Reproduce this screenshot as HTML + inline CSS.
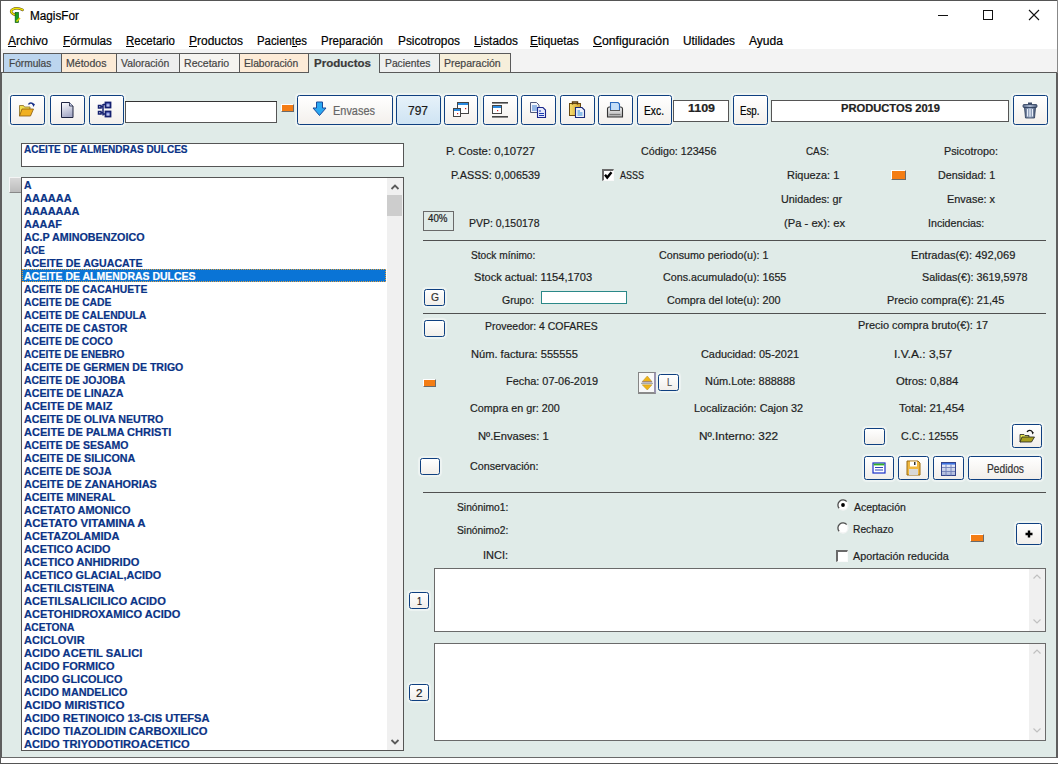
<!DOCTYPE html><html><head><meta charset="utf-8"><style>
html,body{margin:0;padding:0;width:1058px;height:764px;overflow:hidden;background:#fff}
body{position:relative;font-family:"Liberation Sans",sans-serif}
body>div,body>svg{position:absolute}
.t{white-space:nowrap;-webkit-text-stroke:0.2px currentColor}
</style></head><body>
<div style="left:0px;top:0px;width:1058px;height:31px;background:#fff"></div>
<div style="left:0px;top:31px;width:1058px;height:18px;background:#fff"></div>
<div style="left:0px;top:49px;width:1058px;height:24px;background:#f3f3f3"></div>
<div style="left:0px;top:72px;width:1058px;height:1px;background:#5a5a5a"></div>
<div style="left:0px;top:73px;width:1058px;height:684px;background:#e0ebe8"></div>
<div style="left:0px;top:757px;width:1058px;height:1px;background:#6a6a6a"></div>
<div style="left:0px;top:758px;width:1058px;height:5px;background:#fff"></div>
<div style="left:0px;top:763px;width:1058px;height:1px;background:#555"></div>
<div style="left:0px;top:0px;width:1058px;height:1px;background:#555"></div>
<div style="left:0px;top:0px;width:1px;height:764px;background:#555"></div>
<div style="left:0px;top:73px;width:2px;height:685px;background:#5e5e5e"></div>
<div style="left:1056px;top:73px;width:2px;height:685px;background:#5e5e5e"></div>
<div style="left:1057px;top:0px;width:1px;height:73px;background:#888"></div>
<svg style="left:8px;top:5px" width="18" height="19" viewBox="0 0 18 19"><path d="M7.5 10 C4 9 1.5 6.5 4.5 4.5 C7 3 11 3 14.5 4.8" fill="none" stroke="#5a4a20" stroke-width="2.6" stroke-linecap="round"/><path d="M7.5 10 C4 9 1.5 6.5 4.5 4.5 C7 3 11 3 14.5 4.8" fill="none" stroke="#f0e400" stroke-width="1.6" stroke-linecap="round"/><rect x="7.2" y="7.5" width="3.2" height="10" fill="#18a020" stroke="#0b5a10" stroke-width="0.7"/><path d="M8.5 16.5 L12 13" stroke="#e0d000" stroke-width="1.6"/></svg>
<div class="t" style="left:30px;top:6px;font-size:12px;line-height:20px;color:#000;transform:scaleX(0.9796);transform-origin:0 0;">MagisFor</div>
<div style="left:938px;top:15px;width:10px;height:1px;background:#111"></div>
<div style="left:983px;top:10px;width:10px;height:10px;border:1px solid #111;box-sizing:border-box"></div>
<svg style="left:1028px;top:9px" width="12" height="12" viewBox="0 0 12 12"><path d="M1 1 L11 11 M11 1 L1 11" stroke="#111" stroke-width="1.1"/></svg>
<div class="t" style="left:8px;top:31px;font-size:12px;line-height:20px;color:#000;transform:scaleX(0.9995);transform-origin:0 0;">Archivo</div>
<div style="left:8px;top:46px;width:8px;height:1px;background:#000"></div>
<div class="t" style="left:63px;top:31px;font-size:12px;line-height:20px;color:#000;transform:scaleX(0.9796);transform-origin:0 0;">Fórmulas</div>
<div style="left:63px;top:46px;width:7px;height:1px;background:#000"></div>
<div class="t" style="left:126px;top:31px;font-size:12px;line-height:20px;color:#000;transform:scaleX(0.9538);transform-origin:0 0;">Recetario</div>
<div style="left:126px;top:46px;width:8px;height:1px;background:#000"></div>
<div class="t" style="left:189px;top:31px;font-size:12px;line-height:20px;color:#000;transform:scaleX(0.9993);transform-origin:0 0;">Productos</div>
<div style="left:189px;top:46px;width:8px;height:1px;background:#000"></div>
<div class="t" style="left:257px;top:31px;font-size:12px;line-height:20px;color:#000;transform:scaleX(0.9486);transform-origin:0 0;">Pacientes</div>
<div style="left:292px;top:46px;width:5px;height:1px;background:#000"></div>
<div class="t" style="left:321px;top:31px;font-size:12px;line-height:20px;color:#000;transform:scaleX(0.9580);transform-origin:0 0;">Preparación</div>
<div class="t" style="left:398px;top:31px;font-size:12px;line-height:20px;color:#000;transform:scaleX(0.9887);transform-origin:0 0;">Psicotropos</div>
<div class="t" style="left:474px;top:31px;font-size:12px;line-height:20px;color:#000;transform:scaleX(0.9842);transform-origin:0 0;">Listados</div>
<div style="left:474px;top:46px;width:7px;height:1px;background:#000"></div>
<div class="t" style="left:530px;top:31px;font-size:12px;line-height:20px;color:#000;transform:scaleX(0.9791);transform-origin:0 0;">Etiquetas</div>
<div style="left:530px;top:46px;width:8px;height:1px;background:#000"></div>
<div class="t" style="left:593px;top:31px;font-size:12px;line-height:20px;color:#000;transform:scaleX(1.0261);transform-origin:0 0;">Configuración</div>
<div style="left:593px;top:46px;width:9px;height:1px;background:#000"></div>
<div class="t" style="left:683px;top:31px;font-size:12px;line-height:20px;color:#000;transform:scaleX(0.9865);transform-origin:0 0;">Utilidades</div>
<div class="t" style="left:749px;top:31px;font-size:12px;line-height:20px;color:#000;transform:scaleX(1.0054);transform-origin:0 0;">Ayuda</div>
<div style="left:3px;top:53px;width:59px;height:19px;background:#bcd5ee;border:1px solid #5a5a5a;border-bottom:none;box-sizing:border-box"></div>
<div class="t" style="left:9.2px;top:53px;font-size:11px;line-height:20px;color:#444;transform:scaleX(0.9227);transform-origin:0 0;">Fórmulas</div>
<div style="left:61px;top:53px;width:56px;height:19px;background:#fcebd6;border:1px solid #5a5a5a;border-bottom:none;box-sizing:border-box"></div>
<div class="t" style="left:66.3px;top:53px;font-size:11px;line-height:20px;color:#444;transform:scaleX(0.9600);transform-origin:0 0;">Métodos</div>
<div style="left:116px;top:53px;width:64px;height:19px;background:#eeeeee;border:1px solid #5a5a5a;border-bottom:none;box-sizing:border-box"></div>
<div class="t" style="left:121.3px;top:53px;font-size:11px;line-height:20px;color:#444;transform:scaleX(0.9421);transform-origin:0 0;">Valoración</div>
<div style="left:179px;top:53px;width:61px;height:19px;background:#f6f4f0;border:1px solid #5a5a5a;border-bottom:none;box-sizing:border-box"></div>
<div class="t" style="left:184.1px;top:53px;font-size:11px;line-height:20px;color:#444;transform:scaleX(0.9601);transform-origin:0 0;">Recetario</div>
<div style="left:239px;top:53px;width:70px;height:19px;background:#fdebd7;border:1px solid #5a5a5a;border-bottom:none;box-sizing:border-box"></div>
<div class="t" style="left:244.2px;top:53px;font-size:11px;line-height:20px;color:#444;transform:scaleX(0.9347);transform-origin:0 0;">Elaboración</div>
<div style="left:308px;top:53px;width:72px;height:20px;background:#e0ebe8;border:1px solid #5a5a5a;border-bottom:none;box-sizing:border-box"></div>
<div class="t" style="left:313.7px;top:53px;font-size:11px;line-height:20px;color:#3a3a3a;font-weight:bold;transform:scaleX(1.0480);transform-origin:0 0;">Productos</div>
<div style="left:379px;top:53px;width:61px;height:19px;background:#eef0f0;border:1px solid #5a5a5a;border-bottom:none;box-sizing:border-box"></div>
<div class="t" style="left:384.5px;top:53px;font-size:11px;line-height:20px;color:#444;transform:scaleX(0.9378);transform-origin:0 0;">Pacientes</div>
<div style="left:439px;top:53px;width:72px;height:19px;background:#f6efdb;border:1px solid #5a5a5a;border-bottom:none;box-sizing:border-box"></div>
<div class="t" style="left:444.2px;top:53px;font-size:11px;line-height:20px;color:#444;transform:scaleX(0.9560);transform-origin:0 0;">Preparación</div>
<div style="left:309px;top:72px;width:70px;height:1px;background:#e0ebe8"></div>
<div style="left:10px;top:95px;width:35px;height:30px;background:linear-gradient(#ffffff,#f3f0ec);border:1px solid #0e3f80;border-radius:2.5px;box-sizing:border-box;box-shadow:0 0 1px 2px rgba(255,255,255,0.45);"></div>
<div style="left:50px;top:95px;width:35px;height:30px;background:linear-gradient(#ffffff,#f3f0ec);border:1px solid #0e3f80;border-radius:2.5px;box-sizing:border-box;box-shadow:0 0 1px 2px rgba(255,255,255,0.45);"></div>
<div style="left:89px;top:95px;width:35px;height:30px;background:linear-gradient(#ffffff,#f3f0ec);border:1px solid #0e3f80;border-radius:2.5px;box-sizing:border-box;box-shadow:0 0 1px 2px rgba(255,255,255,0.45);"></div>
<svg style="left:18px;top:101px" width="18" height="17" viewBox="0 0 18 17"><path d="M10.5 3.5 C11.5 1.5 14 1.2 15.5 3.5" fill="none" stroke="#17308a" stroke-width="1.5"/><path d="M14 2.5 L17 3 L15.5 6 Z" fill="#17308a"/><path d="M1.5 4.5 L5.5 4.5 L6.5 6 L12 6 L12 8 L1.5 15 Z" fill="#f0de50" stroke="#8a6a20" stroke-width="0.8"/><path d="M4 8 L15.5 8 L12.5 15 L1.5 15 Z" fill="#f0b020" stroke="#8a5a10" stroke-width="0.8"/></svg>
<svg style="left:60px;top:101px" width="15" height="18" viewBox="0 0 15 18"><defs><linearGradient id="dg" x1="0" y1="0" x2="0.3" y2="1"><stop offset="0" stop-color="#ffffff"/><stop offset="1" stop-color="#a8acc8"/></linearGradient></defs><path d="M1.5 1.5 L9.5 1.5 L13 5 L13 16.5 L1.5 16.5 Z" fill="url(#dg)" stroke="#1e2440" stroke-width="1"/><path d="M9.5 1.5 L9.5 5 L13 5" fill="#c8d0e8" stroke="#1e2440" stroke-width="0.8"/></svg>
<svg style="left:97px;top:101px" width="15" height="17" viewBox="0 0 15 17"><defs><linearGradient id="tr" x1="0" y1="0" x2="0" y2="1"><stop offset="0" stop-color="#6a7ae0"/><stop offset="1" stop-color="#e8f0ff"/></linearGradient></defs><rect x="8.5" y="1.5" width="5" height="5" fill="url(#tr)" stroke="#142070" stroke-width="1.8"/><rect x="8.5" y="10.5" width="5" height="5" fill="url(#tr)" stroke="#142070" stroke-width="1.8"/><rect x="1.5" y="4.5" width="2.5" height="2.5" fill="#fff" stroke="#142070" stroke-width="1.5"/><rect x="1.5" y="10.5" width="2.5" height="2.5" fill="#fff" stroke="#142070" stroke-width="1.5"/><path d="M4 5.8 L6.5 5.8 M4 11.8 L6.5 11.8 M6 3 L6 14.5 M6 3.5 L8 3.5 M6 13 L8 13" stroke="#142070" stroke-width="1.5"/></svg>
<div style="left:125px;top:101px;width:152px;height:22px;background:#fff;border:1px solid #555;box-sizing:border-box"></div>
<div style="left:125px;top:101px;width:152px;height:2px;border-top:1px solid #333;box-sizing:border-box"></div>
<div style="left:281px;top:104px;width:13px;height:8px;background:#f47d14;border-top:1px solid #fff;border-left:1px solid #fff;border-bottom:1px solid #6a6a6a;border-right:1px solid #6a6a6a;box-sizing:border-box"></div>
<div style="left:297px;top:95px;width:96px;height:30px;background:linear-gradient(#ffffff,#f3f0ec);border:1px solid #0e3f80;border-radius:2.5px;box-sizing:border-box;box-shadow:0 0 1px 2px rgba(255,255,255,0.45);"></div>
<svg style="left:312px;top:101px" width="15" height="16" viewBox="0 0 15 16"><path d="M4.5 1 L10.5 1 L10.5 7 L14 7 L7.5 14.5 L1 7 L4.5 7 Z" fill="#2aa8f2" stroke="#1a4a9a" stroke-width="1"/></svg>
<div class="t" style="left:333px;top:101px;font-size:12px;line-height:20px;color:#666;transform:scaleX(0.9124);transform-origin:0 0;">Envases</div>
<div style="left:396px;top:95px;width:45px;height:30px;background:linear-gradient(#e6f2fa,#cfe4f3);border:1px solid #0e3f80;border-radius:2.5px;box-sizing:border-box;box-shadow:0 0 1px 2px rgba(255,255,255,0.45);"></div>
<div class="t" style="left:408px;top:101px;font-size:12px;line-height:20px;color:#1a1a1a;transform:scaleX(0.9986);transform-origin:0 0;">797</div>
<div style="left:444px;top:95px;width:34px;height:30px;background:linear-gradient(#ffffff,#f3f0ec);border:1px solid #0e3f80;border-radius:2.5px;box-sizing:border-box;box-shadow:0 0 1px 2px rgba(255,255,255,0.45);"></div>
<div style="left:483px;top:95px;width:35px;height:30px;background:linear-gradient(#ffffff,#f3f0ec);border:1px solid #0e3f80;border-radius:2.5px;box-sizing:border-box;box-shadow:0 0 1px 2px rgba(255,255,255,0.45);"></div>
<svg style="left:452px;top:102px" width="18" height="16" viewBox="0 0 18 16"><rect x="5.5" y="0.5" width="11" height="11" fill="#fff" stroke="#444" stroke-width="1"/><rect x="6" y="1" width="10" height="2" fill="#2a8ae0"/><rect x="1.5" y="6.5" width="7" height="8" fill="#fff" stroke="#444" stroke-width="1"/><rect x="2" y="7" width="6" height="2" fill="#2a8ae0"/><rect x="13" y="6" width="1.2" height="1.2" fill="#d02020"/><rect x="5" y="11" width="1.2" height="1.2" fill="#d02020"/></svg>
<svg style="left:491px;top:102px" width="18" height="16" viewBox="0 0 18 16"><rect x="1" y="0" width="16" height="1.6" fill="#444"/><rect x="1" y="14" width="16" height="1.6" fill="#444"/><rect x="1.5" y="3.5" width="9" height="8" fill="#fff" stroke="#444" stroke-width="1"/><rect x="2" y="4" width="8" height="2" fill="#2a8ae0"/><rect x="6" y="8" width="1.2" height="1.2" fill="#d02020"/></svg>
<div style="left:521px;top:95px;width:35px;height:30px;background:linear-gradient(#ffffff,#f3f0ec);border:1px solid #0e3f80;border-radius:2.5px;box-sizing:border-box;box-shadow:0 0 1px 2px rgba(255,255,255,0.45);"></div>
<div style="left:560px;top:95px;width:35px;height:30px;background:linear-gradient(#ffffff,#f3f0ec);border:1px solid #0e3f80;border-radius:2.5px;box-sizing:border-box;box-shadow:0 0 1px 2px rgba(255,255,255,0.45);"></div>
<div style="left:598px;top:95px;width:35px;height:30px;background:linear-gradient(#ffffff,#f3f0ec);border:1px solid #0e3f80;border-radius:2.5px;box-sizing:border-box;box-shadow:0 0 1px 2px rgba(255,255,255,0.45);"></div>
<svg style="left:529px;top:101px" width="18" height="18" viewBox="0 0 18 18"><path d="M1.5 1.5 L7.5 1.5 L10 4 L10 11.5 L1.5 11.5 Z" fill="#f2f4fa" stroke="#50587a" stroke-width="1"/><path d="M3 5 L8 5 M3 7 L8 7 M3 9 L8 9" stroke="#3a7ad0" stroke-width="1"/><path d="M8.5 6.5 L14 6.5 L16.5 9 L16.5 16.5 L8.5 16.5 Z" fill="#e6eafc" stroke="#1a268a" stroke-width="1.1"/><path d="M10 10 L12 10 M10 12.5 L15 12.5 M10 14.5 L15 14.5" stroke="#1a3ab0" stroke-width="1.1"/></svg>
<svg style="left:568px;top:101px" width="18" height="18" viewBox="0 0 18 18"><defs><linearGradient id="cb" x1="0" x2="1"><stop offset="0" stop-color="#f8e070"/><stop offset="1" stop-color="#d0a030"/></linearGradient></defs><rect x="1.5" y="2.5" width="11" height="12" fill="url(#cb)" stroke="#6a4a10" stroke-width="1"/><path d="M4.5 3.5 L4.5 1 L9.5 1 L9.5 3.5" fill="none" stroke="#5a3a08" stroke-width="1.4"/><path d="M7.5 6.5 L14 6.5 L16.5 9 L16.5 16.5 L7.5 16.5 Z" fill="#eef2fc" stroke="#1a2a7a" stroke-width="1.1"/><path d="M9.5 10 L12 10 M9.5 12 L14.5 12 M9.5 14 L14.5 14" stroke="#2a8ad8" stroke-width="1.1"/></svg>
<svg style="left:606px;top:101px" width="18" height="17" viewBox="0 0 18 17"><defs><linearGradient id="pb" x1="0" y1="0" x2="0" y2="1"><stop offset="0" stop-color="#f4f4f4"/><stop offset="1" stop-color="#b0b0b0"/></linearGradient></defs><path d="M1.5 16 L1.5 8 Q1.5 6 3.5 6 L14.5 6 Q16.5 6 16.5 8 L16.5 16 Z" fill="url(#pb)" stroke="#333" stroke-width="1.1"/><path d="M4.5 9 L4.5 1.5 L12 1.5 L13.5 3 L13.5 9" fill="#c4def8" stroke="#2a6ac0" stroke-width="1.1"/><path d="M4 9.5 L14 9.5" stroke="#555" stroke-width="1"/><path d="M3.5 13.5 L14.5 13.5" stroke="#777" stroke-width="1.2"/></svg>
<div style="left:637px;top:95px;width:35px;height:30px;background:linear-gradient(#ffffff,#f3f0ec);border:1px solid #0e3f80;border-radius:2.5px;box-sizing:border-box;box-shadow:0 0 1px 2px rgba(255,255,255,0.45);"></div>
<div class="t" style="left:643.5px;top:101px;font-size:12px;line-height:20px;color:#000;transform:scaleX(0.8569);transform-origin:0 0;">Exc.</div>
<div style="left:673px;top:100px;width:56px;height:22px;background:#fff;border:1px solid #555;box-sizing:border-box"></div>
<div class="t" style="left:687.5px;top:98px;font-size:11px;line-height:20px;color:#222;font-weight:bold;transform:scaleX(1.1314);transform-origin:0 0;">1109</div>
<div style="left:733px;top:95px;width:35px;height:30px;background:linear-gradient(#ffffff,#f3f0ec);border:1px solid #0e3f80;border-radius:2.5px;box-sizing:border-box;box-shadow:0 0 1px 2px rgba(255,255,255,0.45);"></div>
<div class="t" style="left:739.5px;top:101px;font-size:12px;line-height:20px;color:#000;transform:scaleX(0.8120);transform-origin:0 0;">Esp.</div>
<div style="left:771px;top:100px;width:238px;height:22px;background:#fff;border:1px solid #555;box-sizing:border-box"></div>
<div class="t" style="left:841px;top:98px;font-size:11px;line-height:20px;color:#222;font-weight:bold;transform:scaleX(1.0143);transform-origin:0 0;">PRODUCTOS 2019</div>
<div style="left:1013px;top:95px;width:35px;height:30px;background:linear-gradient(#ffffff,#f3f0ec);border:1px solid #0e3f80;border-radius:2.5px;box-sizing:border-box;box-shadow:0 0 1px 2px rgba(255,255,255,0.45);"></div>
<svg style="left:1022px;top:102px" width="16" height="17" viewBox="0 0 16 17"><defs><linearGradient id="tg" x1="0" x2="1"><stop offset="0" stop-color="#5a6a88"/><stop offset="0.5" stop-color="#aab8d0"/><stop offset="1" stop-color="#4a5a78"/></linearGradient></defs><rect x="6" y="0.5" width="4" height="2" fill="#3a4a68"/><rect x="1" y="2.5" width="14" height="3" rx="1" fill="url(#tg)" stroke="#2a3a58" stroke-width="0.8"/><path d="M2.5 5.5 L13.5 5.5 L12.5 16 L3.5 16 Z" fill="url(#tg)" stroke="#2a3a58" stroke-width="0.8"/><path d="M5.5 7 L5.5 14.5 M8 7 L8 14.5 M10.5 7 L10.5 14.5" stroke="#e8eef8" stroke-width="1"/></svg>
<div style="left:21px;top:143px;width:383px;height:24px;background:#fff;border:1px solid #555;box-sizing:border-box"></div>
<div class="t" style="left:23.5px;top:140px;font-size:10px;line-height:20px;color:#0a3386;font-weight:bold;transform:scaleX(0.9997);transform-origin:0 0;">ACEITE DE ALMENDRAS DULCES</div>
<div style="left:9px;top:177px;width:12px;height:16px;background:linear-gradient(#d8d8d8,#bcbcbc);border-top:1px solid #f4f4f4;border-left:1px solid #f4f4f4;border-bottom:1px solid #888;box-sizing:border-box"></div>
<div style="left:21px;top:177px;width:383px;height:574px;background:#fff;border:1px solid #555;box-sizing:border-box"></div>
<div class="t" style="left:23.5px;top:175px;font-size:10.5px;line-height:20px;color:#0a3386;font-weight:bold;transform:scaleX(0.9892);transform-origin:0 0;">A</div>
<div class="t" style="left:23.5px;top:188px;font-size:10.5px;line-height:20px;color:#0a3386;font-weight:bold;transform:scaleX(1.0485);transform-origin:0 0;">AAAAAA</div>
<div class="t" style="left:23.5px;top:201px;font-size:10.5px;line-height:20px;color:#0a3386;font-weight:bold;transform:scaleX(1.0419);transform-origin:0 0;">AAAAAAA</div>
<div class="t" style="left:23.5px;top:214px;font-size:10.5px;line-height:20px;color:#0a3386;font-weight:bold;transform:scaleX(1.0288);transform-origin:0 0;">AAAAF</div>
<div class="t" style="left:23.5px;top:227px;font-size:10.5px;line-height:20px;color:#0a3386;font-weight:bold;transform:scaleX(1.0226);transform-origin:0 0;">AC.P AMINOBENZOICO</div>
<div class="t" style="left:23.5px;top:240px;font-size:10.5px;line-height:20px;color:#0a3386;font-weight:bold;transform:scaleX(0.9428);transform-origin:0 0;">ACE</div>
<div class="t" style="left:23.5px;top:253px;font-size:10.5px;line-height:20px;color:#0a3386;font-weight:bold;transform:scaleX(1.0106);transform-origin:0 0;">ACEITE DE AGUACATE</div>
<div style="left:22px;top:269px;width:364px;height:13px;background:#0a74d6;outline:1px dotted #e0a040;outline-offset:-1px"></div>
<div class="t" style="left:23.5px;top:266px;font-size:10.5px;line-height:20px;color:#fff;font-weight:bold;transform:scaleX(0.9994);transform-origin:0 0;">ACEITE DE ALMENDRAS DULCES</div>
<div class="t" style="left:23.5px;top:279px;font-size:10.5px;line-height:20px;color:#0a3386;font-weight:bold;transform:scaleX(0.9877);transform-origin:0 0;">ACEITE DE CACAHUETE</div>
<div class="t" style="left:23.5px;top:292px;font-size:10.5px;line-height:20px;color:#0a3386;font-weight:bold;transform:scaleX(0.9867);transform-origin:0 0;">ACEITE DE CADE</div>
<div class="t" style="left:23.5px;top:305px;font-size:10.5px;line-height:20px;color:#0a3386;font-weight:bold;transform:scaleX(0.9843);transform-origin:0 0;">ACEITE DE CALENDULA</div>
<div class="t" style="left:23.5px;top:318px;font-size:10.5px;line-height:20px;color:#0a3386;font-weight:bold;transform:scaleX(1.0032);transform-origin:0 0;">ACEITE DE CASTOR</div>
<div class="t" style="left:23.5px;top:331px;font-size:10.5px;line-height:20px;color:#0a3386;font-weight:bold;transform:scaleX(0.9809);transform-origin:0 0;">ACEITE DE COCO</div>
<div class="t" style="left:23.5px;top:344px;font-size:10.5px;line-height:20px;color:#0a3386;font-weight:bold;transform:scaleX(0.9668);transform-origin:0 0;">ACEITE DE ENEBRO</div>
<div class="t" style="left:23.5px;top:357px;font-size:10.5px;line-height:20px;color:#0a3386;font-weight:bold;transform:scaleX(1.0039);transform-origin:0 0;">ACEITE DE GERMEN DE TRIGO</div>
<div class="t" style="left:23.5px;top:370px;font-size:10.5px;line-height:20px;color:#0a3386;font-weight:bold;transform:scaleX(0.9931);transform-origin:0 0;">ACEITE DE JOJOBA</div>
<div class="t" style="left:23.5px;top:383px;font-size:10.5px;line-height:20px;color:#0a3386;font-weight:bold;transform:scaleX(1.0203);transform-origin:0 0;">ACEITE DE LINAZA</div>
<div class="t" style="left:23.5px;top:396px;font-size:10.5px;line-height:20px;color:#0a3386;font-weight:bold;transform:scaleX(1.0463);transform-origin:0 0;">ACEITE DE MAIZ</div>
<div class="t" style="left:23.5px;top:409px;font-size:10.5px;line-height:20px;color:#0a3386;font-weight:bold;transform:scaleX(1.0154);transform-origin:0 0;">ACEITE DE OLIVA NEUTRO</div>
<div class="t" style="left:23.5px;top:422px;font-size:10.5px;line-height:20px;color:#0a3386;font-weight:bold;transform:scaleX(1.0521);transform-origin:0 0;">ACEITE DE PALMA CHRISTI</div>
<div class="t" style="left:23.5px;top:435px;font-size:10.5px;line-height:20px;color:#0a3386;font-weight:bold;transform:scaleX(0.9997);transform-origin:0 0;">ACEITE DE SESAMO</div>
<div class="t" style="left:23.5px;top:448px;font-size:10.5px;line-height:20px;color:#0a3386;font-weight:bold;transform:scaleX(1.0202);transform-origin:0 0;">ACEITE DE SILICONA</div>
<div class="t" style="left:23.5px;top:461px;font-size:10.5px;line-height:20px;color:#0a3386;font-weight:bold;transform:scaleX(0.9998);transform-origin:0 0;">ACEITE DE SOJA</div>
<div class="t" style="left:23.5px;top:474px;font-size:10.5px;line-height:20px;color:#0a3386;font-weight:bold;transform:scaleX(1.0301);transform-origin:0 0;">ACEITE DE ZANAHORIAS</div>
<div class="t" style="left:23.5px;top:487px;font-size:10.5px;line-height:20px;color:#0a3386;font-weight:bold;transform:scaleX(1.0241);transform-origin:0 0;">ACEITE MINERAL</div>
<div class="t" style="left:23.5px;top:500px;font-size:10.5px;line-height:20px;color:#0a3386;font-weight:bold;transform:scaleX(1.0403);transform-origin:0 0;">ACETATO AMONICO</div>
<div class="t" style="left:23.5px;top:513px;font-size:10.5px;line-height:20px;color:#0a3386;font-weight:bold;transform:scaleX(1.0887);transform-origin:0 0;">ACETATO VITAMINA A</div>
<div class="t" style="left:23.5px;top:526px;font-size:10.5px;line-height:20px;color:#0a3386;font-weight:bold;transform:scaleX(1.0507);transform-origin:0 0;">ACETAZOLAMIDA</div>
<div class="t" style="left:23.5px;top:539px;font-size:10.5px;line-height:20px;color:#0a3386;font-weight:bold;transform:scaleX(1.0346);transform-origin:0 0;">ACETICO ACIDO</div>
<div class="t" style="left:23.5px;top:552px;font-size:10.5px;line-height:20px;color:#0a3386;font-weight:bold;transform:scaleX(1.0552);transform-origin:0 0;">ACETICO ANHIDRIDO</div>
<div class="t" style="left:23.5px;top:565px;font-size:10.5px;line-height:20px;color:#0a3386;font-weight:bold;transform:scaleX(1.0271);transform-origin:0 0;">ACETICO GLACIAL,ACIDO</div>
<div class="t" style="left:23.5px;top:578px;font-size:10.5px;line-height:20px;color:#0a3386;font-weight:bold;transform:scaleX(1.0412);transform-origin:0 0;">ACETILCISTEINA</div>
<div class="t" style="left:23.5px;top:591px;font-size:10.5px;line-height:20px;color:#0a3386;font-weight:bold;transform:scaleX(1.0600);transform-origin:0 0;">ACETILSALICILICO ACIDO</div>
<div class="t" style="left:23.5px;top:604px;font-size:10.5px;line-height:20px;color:#0a3386;font-weight:bold;transform:scaleX(1.0508);transform-origin:0 0;">ACETOHIDROXAMICO ACIDO</div>
<div class="t" style="left:23.5px;top:617px;font-size:10.5px;line-height:20px;color:#0a3386;font-weight:bold;transform:scaleX(0.9725);transform-origin:0 0;">ACETONA</div>
<div class="t" style="left:23.5px;top:630px;font-size:10.5px;line-height:20px;color:#0a3386;font-weight:bold;transform:scaleX(1.0494);transform-origin:0 0;">ACICLOVIR</div>
<div class="t" style="left:23.5px;top:643px;font-size:10.5px;line-height:20px;color:#0a3386;font-weight:bold;transform:scaleX(1.0618);transform-origin:0 0;">ACIDO ACETIL SALICI</div>
<div class="t" style="left:23.5px;top:656px;font-size:10.5px;line-height:20px;color:#0a3386;font-weight:bold;transform:scaleX(1.0483);transform-origin:0 0;">ACIDO FORMICO</div>
<div class="t" style="left:23.5px;top:669px;font-size:10.5px;line-height:20px;color:#0a3386;font-weight:bold;transform:scaleX(1.0349);transform-origin:0 0;">ACIDO GLICOLICO</div>
<div class="t" style="left:23.5px;top:682px;font-size:10.5px;line-height:20px;color:#0a3386;font-weight:bold;transform:scaleX(1.0306);transform-origin:0 0;">ACIDO MANDELICO</div>
<div class="t" style="left:23.5px;top:695px;font-size:10.5px;line-height:20px;color:#0a3386;font-weight:bold;transform:scaleX(1.1033);transform-origin:0 0;">ACIDO MIRISTICO</div>
<div class="t" style="left:23.5px;top:708px;font-size:10.5px;line-height:20px;color:#0a3386;font-weight:bold;transform:scaleX(1.0564);transform-origin:0 0;">ACIDO RETINOICO 13-CIS UTEFSA</div>
<div class="t" style="left:23.5px;top:721px;font-size:10.5px;line-height:20px;color:#0a3386;font-weight:bold;transform:scaleX(1.0664);transform-origin:0 0;">ACIDO TIAZOLIDIN CARBOXILICO</div>
<div class="t" style="left:23.5px;top:734px;font-size:10.5px;line-height:20px;color:#0a3386;font-weight:bold;transform:scaleX(1.0553);transform-origin:0 0;">ACIDO TRIYODOTIROACETICO</div>
<div style="left:387px;top:178px;width:16px;height:572px;background:#f0f0f0"></div>
<div style="left:387px;top:195px;width:15px;height:21px;background:#cdcdcd"></div>
<svg style="left:390px;top:183px" width="10" height="8" viewBox="0 0 10 8"><path d="M1.5 6 L5 2.5 L8.5 6" fill="none" stroke="#5a5a5a" stroke-width="1.8"/></svg>
<svg style="left:390px;top:738px" width="10" height="8" viewBox="0 0 10 8"><path d="M1.5 2 L5 5.5 L8.5 2" fill="none" stroke="#5a5a5a" stroke-width="1.8"/></svg>
<div class="t" style="left:445.5px;top:141px;font-size:11px;line-height:20px;color:#1e1e1e;transform:scaleX(1.0274);transform-origin:0 0;">P. Coste: 0,10727</div>
<div class="t" style="left:641.1px;top:141px;font-size:11px;line-height:20px;color:#1e1e1e;transform:scaleX(0.9708);transform-origin:0 0;">Código: 123456</div>
<div class="t" style="left:805.5px;top:141px;font-size:11px;line-height:20px;color:#1e1e1e;transform:scaleX(0.8959);transform-origin:0 0;">CAS:</div>
<div class="t" style="left:943.5px;top:141px;font-size:11px;line-height:20px;color:#1e1e1e;transform:scaleX(0.9814);transform-origin:0 0;">Psicotropo:</div>
<div class="t" style="left:450.5px;top:165px;font-size:11px;line-height:20px;color:#1e1e1e;transform:scaleX(0.9856);transform-origin:0 0;">P.ASSS: 0,006539</div>
<div class="t" style="left:619.5px;top:165px;font-size:11px;line-height:20px;color:#1e1e1e;transform:scaleX(0.8179);transform-origin:0 0;">ASSS</div>
<div class="t" style="left:786.9px;top:165px;font-size:11px;line-height:20px;color:#1e1e1e;transform:scaleX(0.9927);transform-origin:0 0;">Riqueza: 1</div>
<div class="t" style="left:937.8px;top:165px;font-size:11px;line-height:20px;color:#1e1e1e;transform:scaleX(0.9761);transform-origin:0 0;">Densidad: 1</div>
<div class="t" style="left:781.2px;top:189px;font-size:11px;line-height:20px;color:#1e1e1e;transform:scaleX(0.9797);transform-origin:0 0;">Unidades: gr</div>
<div class="t" style="left:946.5px;top:189px;font-size:11px;line-height:20px;color:#1e1e1e;transform:scaleX(0.9939);transform-origin:0 0;">Envase: x</div>
<div class="t" style="left:469.0px;top:213px;font-size:11px;line-height:20px;color:#1e1e1e;transform:scaleX(0.9528);transform-origin:0 0;">PVP: 0,150178</div>
<div class="t" style="left:783.5px;top:213px;font-size:11px;line-height:20px;color:#1e1e1e;transform:scaleX(1.0184);transform-origin:0 0;">(Pa - ex): ex</div>
<div class="t" style="left:927.5px;top:213px;font-size:11px;line-height:20px;color:#1e1e1e;transform:scaleX(0.9693);transform-origin:0 0;">Incidencias:</div>
<div class="t" style="left:470.9px;top:245px;font-size:11px;line-height:20px;color:#1e1e1e;transform:scaleX(0.9228);transform-origin:0 0;">Stock mínimo:</div>
<div class="t" style="left:659.0px;top:245px;font-size:11px;line-height:20px;color:#1e1e1e;transform:scaleX(0.9733);transform-origin:0 0;">Consumo periodo(u): 1</div>
<div class="t" style="left:911.0px;top:245px;font-size:11px;line-height:20px;color:#1e1e1e;transform:scaleX(1.0093);transform-origin:0 0;">Entradas(€): 492,069</div>
<div class="t" style="left:473.8px;top:267px;font-size:11px;line-height:20px;color:#1e1e1e;transform:scaleX(1.0077);transform-origin:0 0;">Stock actual: 1154,1703</div>
<div class="t" style="left:663.2px;top:267px;font-size:11px;line-height:20px;color:#1e1e1e;transform:scaleX(0.9742);transform-origin:0 0;">Cons.acumulado(u): 1655</div>
<div class="t" style="left:922.1px;top:267px;font-size:11px;line-height:20px;color:#1e1e1e;transform:scaleX(0.9793);transform-origin:0 0;">Salidas(€): 3619,5978</div>
<div class="t" style="left:502.1px;top:290px;font-size:11px;line-height:20px;color:#1e1e1e;transform:scaleX(0.9576);transform-origin:0 0;">Grupo:</div>
<div class="t" style="left:667.0px;top:290px;font-size:11px;line-height:20px;color:#1e1e1e;transform:scaleX(0.9822);transform-origin:0 0;">Compra del lote(u): 200</div>
<div class="t" style="left:886.8px;top:290px;font-size:11px;line-height:20px;color:#1e1e1e;transform:scaleX(0.9933);transform-origin:0 0;">Precio compra(€): 21,45</div>
<div class="t" style="left:484.7px;top:316px;font-size:11px;line-height:20px;color:#1e1e1e;transform:scaleX(0.9511);transform-origin:0 0;">Proveedor: 4 COFARES</div>
<div class="t" style="left:857.8px;top:315px;font-size:11px;line-height:20px;color:#1e1e1e;transform:scaleX(0.9944);transform-origin:0 0;">Precio compra bruto(€): 17</div>
<div class="t" style="left:470.9px;top:344px;font-size:11px;line-height:20px;color:#1e1e1e;transform:scaleX(1.0097);transform-origin:0 0;">Núm. factura: 555555</div>
<div class="t" style="left:701.0px;top:344px;font-size:11px;line-height:20px;color:#1e1e1e;transform:scaleX(0.9892);transform-origin:0 0;">Caducidad: 05-2021</div>
<div class="t" style="left:893.8px;top:344px;font-size:11px;line-height:20px;color:#1e1e1e;transform:scaleX(1.0899);transform-origin:0 0;">I.V.A.: 3,57</div>
<div class="t" style="left:505.9px;top:371px;font-size:11px;line-height:20px;color:#1e1e1e;transform:scaleX(0.9909);transform-origin:0 0;">Fecha: 07-06-2019</div>
<div class="t" style="left:704.8px;top:371px;font-size:11px;line-height:20px;color:#1e1e1e;transform:scaleX(0.9956);transform-origin:0 0;">Núm.Lote: 888888</div>
<div class="t" style="left:896.3px;top:371px;font-size:11px;line-height:20px;color:#1e1e1e;transform:scaleX(1.0277);transform-origin:0 0;">Otros: 0,884</div>
<div class="t" style="left:470.0px;top:398px;font-size:11px;line-height:20px;color:#1e1e1e;transform:scaleX(0.9792);transform-origin:0 0;">Compra en gr: 200</div>
<div class="t" style="left:693.5px;top:398px;font-size:11px;line-height:20px;color:#1e1e1e;transform:scaleX(0.9848);transform-origin:0 0;">Localización: Cajon 32</div>
<div class="t" style="left:899.1px;top:398px;font-size:11px;line-height:20px;color:#1e1e1e;transform:scaleX(1.0384);transform-origin:0 0;">Total: 21,454</div>
<div class="t" style="left:477.9px;top:426px;font-size:11px;line-height:20px;color:#1e1e1e;transform:scaleX(1.0168);transform-origin:0 0;">Nº.Envases: 1</div>
<div class="t" style="left:698.5px;top:426px;font-size:11px;line-height:20px;color:#1e1e1e;transform:scaleX(1.0716);transform-origin:0 0;">Nº.Interno: 322</div>
<div class="t" style="left:901.0px;top:426px;font-size:11px;line-height:20px;color:#1e1e1e;transform:scaleX(0.9728);transform-origin:0 0;">C.C.: 12555</div>
<div class="t" style="left:470.0px;top:456px;font-size:11px;line-height:20px;color:#1e1e1e;transform:scaleX(0.9742);transform-origin:0 0;">Conservación:</div>
<div class="t" style="left:456.8px;top:497px;font-size:11px;line-height:20px;color:#1e1e1e;transform:scaleX(0.9340);transform-origin:0 0;">Sinónimo1:</div>
<div class="t" style="left:853.7px;top:497px;font-size:11px;line-height:20px;color:#1e1e1e;transform:scaleX(0.9518);transform-origin:0 0;">Aceptación</div>
<div class="t" style="left:456.8px;top:520px;font-size:11px;line-height:20px;color:#1e1e1e;transform:scaleX(0.9340);transform-origin:0 0;">Sinónimo2:</div>
<div class="t" style="left:853.2px;top:519px;font-size:11px;line-height:20px;color:#1e1e1e;transform:scaleX(0.9329);transform-origin:0 0;">Rechazo</div>
<div class="t" style="left:483.2px;top:545px;font-size:11px;line-height:20px;color:#1e1e1e;transform:scaleX(0.9978);transform-origin:0 0;">INCI:</div>
<div class="t" style="left:853.2px;top:546px;font-size:11px;line-height:20px;color:#1e1e1e;transform:scaleX(0.9782);transform-origin:0 0;">Aportación reducida</div>
<div style="left:423px;top:240px;width:623px;height:1px;background:#505050"></div>
<div style="left:423px;top:313px;width:623px;height:1px;background:#505050"></div>
<div style="left:423px;top:492px;width:623px;height:1px;background:#505050"></div>
<div style="left:602px;top:169px;width:12px;height:12px;background:#fff;border-top:2px solid #6a6a6a;border-left:2px solid #6a6a6a;border-bottom:1px solid #fafafa;border-right:1px solid #fafafa;box-sizing:border-box"></div>
<svg style="left:602px;top:169px" width="12" height="12" viewBox="0 0 12 12"><path d="M3 5.8 L5.2 8.5 L9.5 3.2" fill="none" stroke="#000" stroke-width="2.4"/></svg>
<div style="left:891px;top:170px;width:15px;height:10px;background:#f47d14;border-top:1px solid #fff;border-left:1px solid #fff;border-bottom:1px solid #6a6a6a;border-right:1px solid #6a6a6a;box-sizing:border-box"></div>
<div style="left:423px;top:211px;width:31px;height:20px;border:1px solid #6a6a6a;box-sizing:border-box"></div>
<div class="t" style="left:427.5px;top:209px;font-size:10px;line-height:20px;color:#222;transform:scaleX(0.9742);transform-origin:0 0;">40%</div>
<div style="left:424px;top:289px;width:21px;height:17px;background:linear-gradient(#ffffff,#f1eeea);border:1px solid #0e3f80;border-radius:2.5px;box-sizing:border-box;box-shadow:0 0 1px 2px rgba(255,255,255,0.45);"></div>
<div class="t" style="left:431px;top:287px;font-size:11px;line-height:20px;color:#333;transform:scaleX(0.9352);transform-origin:0 0;">G</div>
<div style="left:541px;top:291px;width:86px;height:13px;background:#fff;border:1px solid #2a8888;box-sizing:border-box"></div>
<div style="left:424px;top:320px;width:21px;height:17px;background:linear-gradient(#ffffff,#f1eeea);border:1px solid #0e3f80;border-radius:2.5px;box-sizing:border-box;box-shadow:0 0 1px 2px rgba(255,255,255,0.45);"></div>
<div style="left:423px;top:379px;width:13px;height:8px;background:#f47d14;border-top:1px solid #fff;border-left:1px solid #fff;border-bottom:1px solid #6a6a6a;border-right:1px solid #6a6a6a;box-sizing:border-box"></div>
<div style="left:638px;top:372px;width:18px;height:22px;background:#f8f8f8;border:1px solid #858585;border-right:2px solid #9a94b0;border-bottom:2px solid #8a8a8a;box-sizing:border-box"></div>
<svg style="left:640px;top:374px" width="15" height="18" viewBox="0 0 15 18"><path d="M2.2 7.7 L7.3 2 L12 7.7 Z" fill="#f0b418" stroke="#b08a20" stroke-width="0.5"/><path d="M2.2 7.9 L12 7.9" stroke="#6a5aa0" stroke-width="0.7"/><path d="M1 9.3 L13 9.3" stroke="#8a8a8a" stroke-width="0.9"/><path d="M2.2 10.8 L12 10.8 L7.3 16 Z" fill="#f0b418" stroke="#b08a20" stroke-width="0.5"/></svg>
<div style="left:658px;top:374px;width:21px;height:17px;background:linear-gradient(#ffffff,#f1eeea);border:1px solid #0e3f80;border-radius:2.5px;box-sizing:border-box;box-shadow:0 0 1px 2px rgba(255,255,255,0.45);"></div>
<div class="t" style="left:666.5px;top:373px;font-size:10px;line-height:20px;color:#555;transform:scaleX(0.8989);transform-origin:0 0;">L</div>
<div style="left:864px;top:428px;width:21px;height:17px;background:linear-gradient(#ffffff,#f1eeea);border:1px solid #0e3f80;border-radius:2.5px;box-sizing:border-box;box-shadow:0 0 1px 2px rgba(255,255,255,0.45);"></div>
<div style="left:1012px;top:424px;width:30px;height:24px;background:linear-gradient(#ffffff,#f1eeea);border:1px solid #0e3f80;border-radius:2.5px;box-sizing:border-box;box-shadow:0 0 1px 2px rgba(255,255,255,0.45);"></div>
<svg style="left:1019px;top:429px" width="17" height="14" viewBox="0 0 17 14"><path d="M8 3 C9 1 12 0.5 13.5 3" fill="none" stroke="#111" stroke-width="1.2"/><path d="M12.5 2.5 L15 3.5 L13.5 5.5 Z" fill="#111"/><path d="M1 5.5 L5 5.5 L6 6.5 L10 6.5 L10 8 L1 13 Z" fill="#e8e850" stroke="#222" stroke-width="0.8"/><path d="M3 8 L15.5 8 L12.5 13 L1 13 Z" fill="#a8a020" stroke="#222" stroke-width="0.8"/></svg>
<div style="left:420px;top:458px;width:20px;height:17px;background:linear-gradient(#ffffff,#f1eeea);border:1px solid #0e3f80;border-radius:2.5px;box-sizing:border-box;box-shadow:0 0 1px 2px rgba(255,255,255,0.45);"></div>
<div style="left:864px;top:456px;width:30px;height:24px;background:linear-gradient(#ffffff,#f1eeea);border:1px solid #0e3f80;border-radius:2.5px;box-sizing:border-box;box-shadow:0 0 1px 2px rgba(255,255,255,0.45);"></div>
<div style="left:898px;top:456px;width:31px;height:24px;background:linear-gradient(#ffffff,#f1eeea);border:1px solid #0e3f80;border-radius:2.5px;box-sizing:border-box;box-shadow:0 0 1px 2px rgba(255,255,255,0.45);"></div>
<div style="left:933px;top:456px;width:31px;height:24px;background:linear-gradient(#ffffff,#f1eeea);border:1px solid #0e3f80;border-radius:2.5px;box-sizing:border-box;box-shadow:0 0 1px 2px rgba(255,255,255,0.45);"></div>
<div style="left:968px;top:456px;width:74px;height:24px;background:linear-gradient(#ffffff,#f1eeea);border:1px solid #0e3f80;border-radius:2.5px;box-sizing:border-box;box-shadow:0 0 1px 2px rgba(255,255,255,0.45);"></div>
<svg style="left:872px;top:462px" width="14" height="12" viewBox="0 0 14 12"><rect x="1" y="1" width="12" height="10" fill="#fff" stroke="#1a30c8" stroke-width="1.2"/><rect x="1.6" y="1.6" width="10.8" height="1.8" fill="#30b028"/><path d="M3 5.5 L11 5.5 M3 8 L11 8" stroke="#1a30b0" stroke-width="0.9"/></svg>
<svg style="left:906px;top:460px" width="15" height="16" viewBox="0 0 15 16"><path d="M1 1 L12 1 L14 3 L14 15 L1 15 Z" fill="#f0b840" stroke="#9a6a10" stroke-width="1"/><rect x="4" y="1.5" width="7" height="5" fill="#fff"/><rect x="8" y="2" width="1.5" height="3" fill="#333"/><rect x="3" y="9" width="9" height="6" fill="#d8d8d8"/></svg>
<svg style="left:941px;top:462px" width="15" height="14" viewBox="0 0 15 14"><defs><linearGradient id="gg" x1="0" y1="0" x2="0" y2="1"><stop offset="0" stop-color="#f4f8ff"/><stop offset="1" stop-color="#a8b4d8"/></linearGradient></defs><rect x="0.5" y="0.5" width="14" height="13" fill="url(#gg)" stroke="#34448a" stroke-width="1"/><rect x="1" y="1" width="13" height="1.6" fill="#3a70e0"/><path d="M1 5.5 L14 5.5 M1 9.5 L14 9.5 M5 2.5 L5 13.5 M10 2.5 L10 13.5" stroke="#7080b8" stroke-width="0.9"/></svg>
<div class="t" style="left:986.5px;top:459px;font-size:12px;line-height:20px;color:#333;transform:scaleX(0.8530);transform-origin:0 0;">Pedidos</div>
<svg style="left:837px;top:499px" width="12" height="12" viewBox="0 0 12 12"><circle cx="6" cy="6" r="4.8" fill="#fff"/><path d="M2.2 9.4 A5 5 0 0 1 9.8 2.6" fill="none" stroke="#505050" stroke-width="1.3"/><path d="M9.8 2.6 A5 5 0 0 1 2.2 9.4" fill="none" stroke="#f4f4f4" stroke-width="1.1"/><circle cx="6" cy="6" r="1.9" fill="#000"/></svg>
<svg style="left:837px;top:522px" width="12" height="12" viewBox="0 0 12 12"><circle cx="6" cy="6" r="4.8" fill="#fff"/><path d="M2.2 9.4 A5 5 0 0 1 9.8 2.6" fill="none" stroke="#505050" stroke-width="1.3"/><path d="M9.8 2.6 A5 5 0 0 1 2.2 9.4" fill="none" stroke="#f4f4f4" stroke-width="1.1"/></svg>
<div style="left:970px;top:534px;width:14px;height:8px;background:#f47d14;border-top:1px solid #fff;border-left:1px solid #fff;border-bottom:1px solid #6a6a6a;border-right:1px solid #6a6a6a;box-sizing:border-box"></div>
<div style="left:1016px;top:523px;width:26px;height:22px;background:linear-gradient(#ffffff,#f1eeea);border:1px solid #0e3f80;border-radius:2.5px;box-sizing:border-box;box-shadow:0 0 1px 2px rgba(255,255,255,0.45);"></div>
<svg style="left:1024px;top:529px" width="10" height="10" viewBox="0 0 10 10"><path d="M5 1.5 L5 8.5 M1.5 5 L8.5 5" stroke="#000" stroke-width="2.4"/></svg>
<div style="left:836px;top:550px;width:12px;height:12px;background:#fff;border-top:2px solid #6a6a6a;border-left:2px solid #6a6a6a;border-bottom:1px solid #fafafa;border-right:1px solid #fafafa;box-sizing:border-box"></div>
<div style="left:434px;top:568px;width:612px;height:64px;background:#fff;border:1px solid #6a6a6a;box-sizing:border-box"></div>
<div style="left:1029px;top:569px;width:16px;height:62px;background:#f0f0f0"></div>
<svg style="left:1032px;top:573px" width="10" height="7" viewBox="0 0 10 7"><path d="M1.5 5.5 L5 2 L8.5 5.5" fill="none" stroke="#c0c0c0" stroke-width="1.2"/></svg>
<svg style="left:1032px;top:618px" width="10" height="7" viewBox="0 0 10 7"><path d="M1.5 1.5 L5 5 L8.5 1.5" fill="none" stroke="#c0c0c0" stroke-width="1.2"/></svg>
<div style="left:434px;top:643px;width:612px;height:98px;background:#fff;border:1px solid #6a6a6a;box-sizing:border-box"></div>
<div style="left:1029px;top:644px;width:16px;height:96px;background:#f0f0f0"></div>
<svg style="left:1032px;top:648px" width="10" height="7" viewBox="0 0 10 7"><path d="M1.5 5.5 L5 2 L8.5 5.5" fill="none" stroke="#c0c0c0" stroke-width="1.2"/></svg>
<svg style="left:1032px;top:727px" width="10" height="7" viewBox="0 0 10 7"><path d="M1.5 1.5 L5 5 L8.5 1.5" fill="none" stroke="#c0c0c0" stroke-width="1.2"/></svg>
<div style="left:409px;top:592px;width:20px;height:17px;background:linear-gradient(#ffffff,#f1eeea);border:1px solid #0e3f80;border-radius:2.5px;box-sizing:border-box;box-shadow:0 0 1px 2px rgba(255,255,255,0.45);"></div>
<div class="t" style="left:416.5px;top:591px;font-size:11px;line-height:20px;color:#222;transform:scaleX(0.8174);transform-origin:0 0;">1</div>
<div style="left:409px;top:684px;width:20px;height:17px;background:linear-gradient(#ffffff,#f1eeea);border:1px solid #0e3f80;border-radius:2.5px;box-sizing:border-box;box-shadow:0 0 1px 2px rgba(255,255,255,0.45);"></div>
<div class="t" style="left:416px;top:683px;font-size:11px;line-height:20px;color:#222;transform:scaleX(1.0626);transform-origin:0 0;">2</div>
</body></html>
